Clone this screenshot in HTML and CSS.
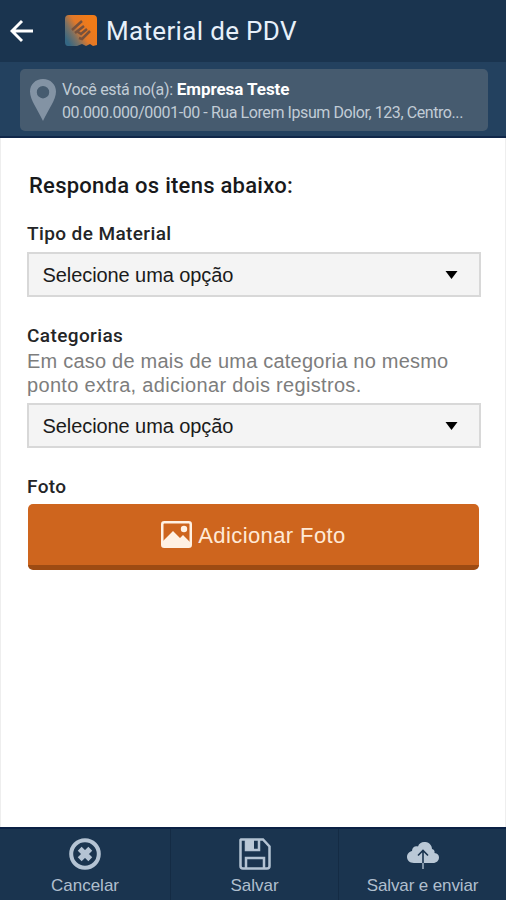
FILE: index.html
```html
<!DOCTYPE html>
<html lang="pt-BR">
<head>
<meta charset="utf-8">
<title>Material de PDV</title>
<link rel="stylesheet" href="styles.css">
</head>
<body>
<div class="screen">
  <header class="topbar">
    <svg class="back" viewBox="0 0 24 24"><path d="M23 12H2M12 2 2 12l10 10"/></svg>
    <svg class="logo" viewBox="0 0 32 32">
      <defs><linearGradient id="lg" x1="0" y1=".75" x2=".8" y2=".25"><stop offset="0" stop-color="#356783"/><stop offset=".3" stop-color="#7c7163"/><stop offset=".58" stop-color="#e17829"/><stop offset="1" stop-color="#f17b18"/></linearGradient></defs>
      <path fill="url(#lg)" d="M4 0h24q4 0 4 4v26l-4 1-3-2-4 2-4-2-5 2H3q-3 0-3-4V4q0-4 4-4z"/>
      <path class="mark" d="M7 15 17 6M10 18l9-7M13 17l3 2 6-5M14 23l3 1 8-8"/>
    </svg>
    <h1 class="title">Material de PDV</h1>
  </header>
  <section class="place">
    <div class="place-card">
      <svg class="pin" viewBox="0 0 26 42"><path fill-rule="evenodd" d="M13 0C5.500 0 0 5.500 0 12.500 0 21 8 31 13 42 18 31 26 21 26 12.500 26 5.500 20.500 0 13 0zm0 7a6.200 6.200 0 1 1 0 12.400A6.200 6.200 0 0 1 13 7z"/></svg>
      <div class="place-text">
        <p class="here"><span class="here-label">Você está no(a):</span> <b class="company">Empresa Teste</b></p>
        <p class="address">00.000.000/0001-00 - Rua Lorem Ipsum Dolor, 123, Centro...</p>
      </div>
    </div>
  </section>
  <main class="form">
    <h2 class="heading">Responda os itens abaixo:</h2>
    <section class="field field-type">
      <h3 class="label label-type">Tipo de Material</h3>
      <div class="select"><span class="select-text">Selecione uma opção</span><svg class="caret" viewBox="0 0 12 8"><path d="M0 0h12L6 8z"/></svg></div>
    </section>
    <section class="field field-category">
      <h3 class="label label-category">Categorias</h3>
      <p class="hint"><span class="hint-a">Em caso de mais de uma categoria no mesmo</span><br><span class="hint-b">ponto extra, adicionar dois registros.</span></p>
      <div class="select"><span class="select-text">Selecione uma opção</span><svg class="caret" viewBox="0 0 12 8"><path d="M0 0h12L6 8z"/></svg></div>
    </section>
    <section class="field">
      <h3 class="label label-photo">Foto</h3>
      <div class="add">
        <svg class="picture" viewBox="0 0 31 27"><rect x="1.250" y="1.250" width="28.500" height="24.500" rx="2"/><path d="M2 25v-5l10-10 7 7 3-3 7 7v4z"/><circle cx="23" cy="8" r="3.200"/></svg>
        <span class="add-text">Adicionar Foto</span>
      </div>
    </section>
  </main>
  <footer class="actions">
    <div class="action">
      <svg class="icon" viewBox="0 0 32 32"><circle class="line ring" cx="16" cy="16" r="13.800"/><path class="cross" d="m10.700 10.700 10.600 10.600m0-10.600L10.700 21.300"/></svg>
      <span class="caption cancel">Cancelar</span>
    </div>
    <div class="action">
      <svg class="icon" viewBox="0 0 32 32"><path class="line" d="M2 1.500h22l6.500 7V28q0 2.500-2.500 2.500H4Q1.500 30.500 1.500 28V2zM7 30V20h18v10M7 2v10h13V2"/><path class="solid" d="M7 2h8v10H7z"/></svg>
      <span class="caption save">Salvar</span>
    </div>
    <div class="action">
      <svg class="icon" viewBox="0 0 32 32"><path class="solid" d="M7 25C2.500 25 0 22 0 19c0-3.500 2.500-5.500 5-6C5 9.500 8 7.500 11 8.500 12 5 15 3.500 18.500 4c4 .5 6.500 3.500 6.500 7 2 .5 3 2 2.500 4 3 .5 4.500 2 4.500 4.500 0 3-2.500 5.500-6 5.500z"/><path class="arrow" d="M16 25V13m-5 4.500 5-5 5 5"/><path class="tail" d="M16 25v6"/></svg>
      <span class="caption send">Salvar e enviar</span>
    </div>
  </footer>
</div>
</body>
</html>
```
FILE: styles.css
```css
* { box-sizing: border-box; }
body, h1, h2, h3, p { margin: 0; }
body { font-family: "Liberation Sans", sans-serif; background: #fff; }
svg { display: block; flex: none; }
.screen { width: 506px; height: 900px; display: flex; flex-direction: column; overflow: hidden; }
.topbar { height: 62px; flex: none; background: #1a344f; display: flex; align-items: center; padding-left: 10px; }
.back { width: 24px; height: 24px; fill: none; stroke: #fff; stroke-width: 2.9; }
.logo { width: 32px; height: 32px; margin-left: 31px; }
.mark { fill: none; stroke: #77513c; stroke-width: 2.5; }
.title { margin-left: 9px; font: 400 26px/32px Roboto, sans-serif; letter-spacing: .33px; color: #e7f0fa; white-space: nowrap; }
.place { height: 76px; flex: none; background: #23415f; border-bottom: 2px solid #102749; padding: 7px 18px 0 20px; }
.place-card { height: 62px; border-radius: 5px; background: #465b6f; display: flex; padding: 10px 0 0 10px; }
.pin { width: 26px; height: 42px; fill: #8393a4; }
.place-text { margin-left: 6px; white-space: nowrap; }
.here { height: 23px; font: 16px/21px Roboto, sans-serif; color: #c1ccd6; }
.here-label { letter-spacing: -.33px; }
.company { font-weight: 700; font-size: 17px; letter-spacing: -.05px; color: #fff; }
.address { font: 16px/21px Roboto, sans-serif; letter-spacing: -.42px; color: #c1ccd6; }
.form { flex: 1; padding: 33px 25px 0 26px; background: #fff; border-left: 1px solid #eee; border-right: 1px solid #eee; }
.heading { height: 50px; padding-left: 2px; font: 500 22px/30px Roboto, sans-serif; letter-spacing: .26px; color: #18191b; white-space: nowrap; }
.label { height: 26px; padding-top: 1px; font: 500 19px/24px Roboto, sans-serif; letter-spacing: .4px; color: #242527; white-space: nowrap; }
.field-type { height: 102px; }
.label-type { height: 31px; }
.field-category { height: 151px; }
.label-photo { height: 30px; }
.select { width: 454px; height: 45px; border: 2px solid #d8d8d8; background: #f4f4f4; display: flex; align-items: center; justify-content: space-between; padding: 1px 21px 0 13.500px; color: #1b1b1b; font-size: 20px; letter-spacing: -.08px; }
.caret { width: 13px; height: 8px; fill: #000; }
.hint { height: 54px; font-size: 20px; line-height: 24px; color: #7d7d7d; white-space: nowrap; }
.hint-a { letter-spacing: .22px; }
.hint-b { letter-spacing: .32px; }
.add { width: 451px; height: 66px; margin-left: 1px; padding-top: 3px; border-radius: 5px; background: #ce651e; border-bottom: 5px solid #9d4b13; display: flex; align-items: center; justify-content: center; color: #ffe9d6; font-size: 22px; letter-spacing: .4px; }
.picture { width: 31px; height: 27px; margin: -4px 6px 0 0; fill: #fff1e3; }
.picture rect { fill: none; stroke: #fff1e3; stroke-width: 2.500px; }
.actions { height: 73px; flex: none; display: grid; grid-template-columns: 171px 168px 167px; background: #1a344f; border-top: 2px solid #0b2145; }
.action { display: flex; flex-direction: column; align-items: center; padding-top: 9px; border-right: 1px solid #142b44; }
.action:last-child { border: 0; }
.icon { width: 32px; height: 32px; }
.line { fill: none; stroke: #b4c3d3; stroke-width: 2.500; }
.ring { stroke-width: 4; }
.cross { fill: none; stroke: #b4c3d3; stroke-width: 5.500; }
.solid { fill: #bac8d6; }
.arrow { fill: none; stroke: #1a344f; stroke-width: 1.6; }
.tail { stroke: #8093a6; stroke-width: 2; }
.caption { margin-top: 6px; font-size: 17px; line-height: 20px; color: #b0bfce; white-space: nowrap; }
.send { letter-spacing: -.12px; }
```
